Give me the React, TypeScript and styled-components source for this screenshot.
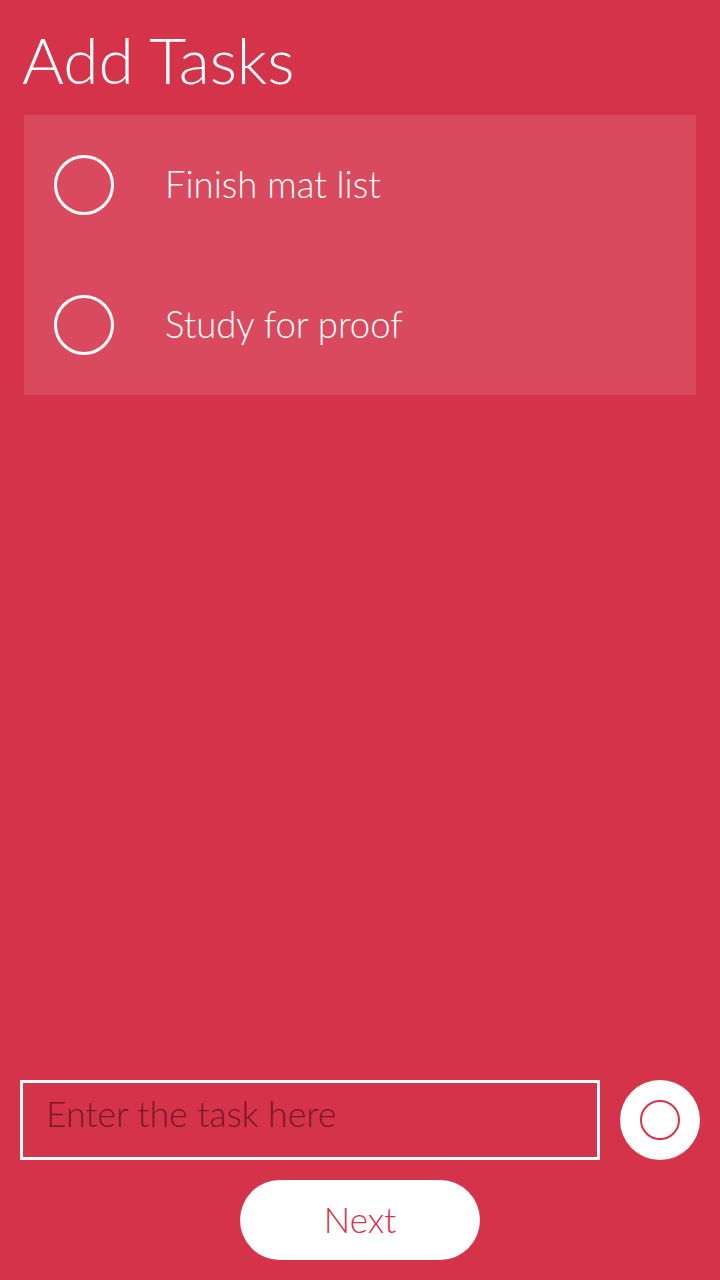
import React from "react";
import styled, { createGlobalStyle } from "styled-components";

const Global = createGlobalStyle`
  html, body { margin: 0; padding: 0; background: #d5334a; }
  body { font-family: Lato, "Open Sans", sans-serif; }
  * { box-sizing: border-box; }
`;

const Page = styled.div`
  width: 720px;
  height: 1280px;
  background: #d5334a;
  display: flex;
  flex-direction: column;
  padding: 0 20px 20px 20px;
`;

const Title = styled.h1`
  margin: 0;
  padding: 22px 0 0 2px;
  height: 115px;
  font-family: Lato, sans-serif;
  font-weight: 300;
  font-size: 64px;
  line-height: 76px;
  color: #ffffff;
`;

const Panel = styled.ul`
  list-style: none;
  margin: 0 4px;
  padding: 0;
  background: #da4a5f;
  display: flex;
  flex-direction: column;
`;

const Row = styled.li`
  height: 140px;
  display: flex;
  align-items: center;
  padding-left: 30px;
`;

const Ring = styled.span`
  width: 60px;
  height: 60px;
  border-radius: 50%;
  border: 3px solid #ffffff;
  flex-shrink: 0;
`;

const TaskText = styled.span`
  margin-left: 51px;
  font-family: Lato, sans-serif;
  font-weight: 300;
  font-size: 36.5px;
  color: #ffffff;
  padding-bottom: 2px;
`;

const Spacer = styled.div`
  flex: 1;
`;

const InputRow = styled.div`
  display: flex;
  align-items: center;
  gap: 20px;
  height: 80px;
`;

const TaskInput = styled.input`
  width: 580px;
  height: 80px;
  border: 3px solid #ffffff;
  background: transparent;
  padding: 0 0 14px 23px;
  font-family: Lato, sans-serif;
  font-weight: 300;
  font-size: 35.5px;
  color: #6e1322;
  outline: none;
  &::placeholder {
    color: #7a1726;
    opacity: 1;
  }
`;

const AddButton = styled.button`
  width: 80px;
  height: 80px;
  border-radius: 50%;
  border: none;
  background: #ffffff;
  display: flex;
  align-items: center;
  justify-content: center;
  padding: 0;
`;

const InnerRing = styled.span`
  width: 40px;
  height: 40px;
  border-radius: 50%;
  border: 2.5px solid #d5334a;
`;

const NextWrap = styled.div`
  display: flex;
  justify-content: center;
  margin-top: 20px;
`;

const NextButton = styled.button`
  width: 240px;
  height: 80px;
  border-radius: 40px;
  border: none;
  background: #ffffff;
  color: #d5334a;
  font-family: Lato, sans-serif;
  font-weight: 300;
  font-size: 35px;
  padding: 0 0 2px 0;
`;

const tasks = ["Finish mat list", "Study for proof"];

export default function App() {
  return (
    <>
      <Global />
      <Page>
        <Title>Add Tasks</Title>
        <Panel>
          {tasks.map((t) => (
            <Row key={t}>
              <Ring />
              <TaskText>{t}</TaskText>
            </Row>
          ))}
        </Panel>
        <Spacer />
        <InputRow>
          <TaskInput placeholder="Enter the task here" />
          <AddButton aria-label="Add task">
            <InnerRing />
          </AddButton>
        </InputRow>
        <NextWrap>
          <NextButton>Next</NextButton>
        </NextWrap>
      </Page>
    </>
  );
}
